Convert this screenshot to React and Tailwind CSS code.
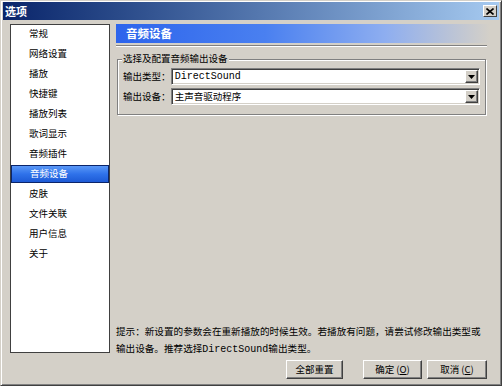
const ITEMS = [
  '常规',
  '网络设置',
  '播放',
  '快捷键',
  '播放列表',
  '歌词显示',
  '音频插件',
  '音频设备',
  '皮肤',
  '文件关联',
  '用户信息',
  '关于',
];

const FONT = "font-['SimSun','Noto_Sans_CJK_SC',sans-serif]";
const MONO = "font-['Liberation_Mono','Noto_Sans_CJK_SC',monospace]";

function RaisedButton({ children, className = '' }) {
  return (
    <button
      className={`h-[19px] bg-[#d4d0c8] text-[9.5px] leading-none text-black border border-t-white border-l-white border-b-[#404040] border-r-[#404040] shadow-[inset_-1px_-1px_0_#808080] flex items-center justify-center ${className}`}
    >
      {children}
    </button>
  );
}

function Select({ value, mono = false }) {
  return (
    <div className="w-[310px] h-[17px] bg-white border border-t-[#808080] border-l-[#808080] border-b-white border-r-white shadow-[inset_1px_1px_0_#404040,inset_-1px_-1px_0_#d4d0c8] flex items-center">
      <span
        className={`pl-[3px] flex-1 leading-none text-black ${
          mono ? `${MONO} text-[10px]` : 'text-[9.5px]'
        }`}
      >
        {value}
      </span>
      <div className="w-[13px] h-[13px] mr-[1px] bg-[#d4d0c8] border border-t-white border-l-white border-b-[#404040] border-r-[#404040] shadow-[inset_-1px_-1px_0_#808080] flex items-center justify-center">
        <svg width="7" height="4" viewBox="0 0 7 4">
          <path d="M0 0h7L3.5 4z" fill="#000" />
        </svg>
      </div>
    </div>
  );
}

export default function App() {
  return (
    <div className={`w-[502px] h-[386px] bg-[#d4d0c8] border border-t-[#d4d0c8] border-l-[#d4d0c8] border-r-[#404040] border-b-[#404040] shadow-[inset_1px_1px_0_#ffffff,inset_-1px_-1px_0_#808080] flex flex-col ${FONT}`}>
      {/* title bar */}
      <div className="mx-[2px] mt-[1px] h-[18px] flex items-center justify-between bg-gradient-to-r from-[#0a246a] to-[#a6caf0]">
        <span className="pl-[2px] text-[11px] font-bold text-white leading-none">选项</span>
        <div className="w-[14px] h-[12px] mr-[2px] bg-[#d4d0c8] border border-t-white border-l-white border-b-[#404040] border-r-[#404040] flex items-center justify-center">
          <svg width="8" height="7" viewBox="0 0 8 7">
            <path d="M0.5 0.5L7.5 6.5M7.5 0.5L0.5 6.5" stroke="#000" strokeWidth="1.6" />
          </svg>
        </div>
      </div>

      <div className="flex pl-[9px] pt-[4px]">
        {/* left list */}
        <div className="w-[100px] h-[329px] bg-white border border-[#404040] flex flex-col gap-[2px]">
          {ITEMS.map((item) => {
            const active = item === '音频设备';
            return (
              <div
                key={item}
                className={`h-[18px] flex items-center pl-[18px] text-[9.5px] leading-none ${
                  active
                    ? 'text-white bg-gradient-to-b from-[#5a98f7] via-[#2f72ea] to-[#1d5ad6] border border-[#0a246a]'
                    : 'text-black'
                }`}
              >
                {item}
              </div>
            );
          })}
        </div>

        {/* right panel */}
        <div className="ml-[6px] w-[374px] flex flex-col">
          <div className="h-[19px] flex items-center pl-[10px] bg-[linear-gradient(to_right,#2c64ec_0%,#4a80f0_40%,#8eaef0_72%,#d4d0c8_100%)]">
            <span className="text-[11.5px] font-bold text-white leading-none">音频设备</span>
          </div>
          <div className="mt-[2px] mr-[3px] h-[2px] border-t border-t-[#808080] border-b border-b-white" />

          {/* group box */}
          <div className="relative mt-[12px] ml-[1px] mr-[4px] h-[56px] border border-[#808080] shadow-[inset_1px_1px_0_#ffffff,1px_1px_0_#ffffff] px-[5px] pt-[8px] flex flex-col gap-[3px]">
            <span className="absolute -top-[6px] left-[4px] px-[1px] bg-[#d4d0c8] text-[9.5px] leading-none text-black">
              选择及配置音频输出设备
            </span>
            <div className="flex items-center">
              <span className="w-[48px] text-[9.5px] leading-none text-black whitespace-nowrap">输出类型：</span>
              <Select value="DirectSound" mono />
            </div>
            <div className="flex items-center">
              <span className="w-[48px] text-[9.5px] leading-none text-black whitespace-nowrap">输出设备：</span>
              <Select value="主声音驱动程序" />
            </div>
          </div>

          <div className="mt-[208px] text-[9.6px] leading-[17px] text-black whitespace-nowrap">
            提示：新设置的参数会在重新播放的时候生效。若播放有问题，请尝试修改输出类型或
            <br />
            输出设备。推荐选择<span className={`${MONO} text-[10px]`}>DirectSound</span>输出类型。
          </div>

          <div className="mt-[2px] flex justify-end pr-[3px]">
            <RaisedButton className="w-[57px] mr-[20px]">全部重置</RaisedButton>
            <RaisedButton className="w-[59px] mr-[5px]">
              确定 (<span className="underline">O</span>)
            </RaisedButton>
            <RaisedButton className="w-[60px]">
              取消 (<span className="underline">C</span>)
            </RaisedButton>
          </div>
        </div>
      </div>
    </div>
  );
}
